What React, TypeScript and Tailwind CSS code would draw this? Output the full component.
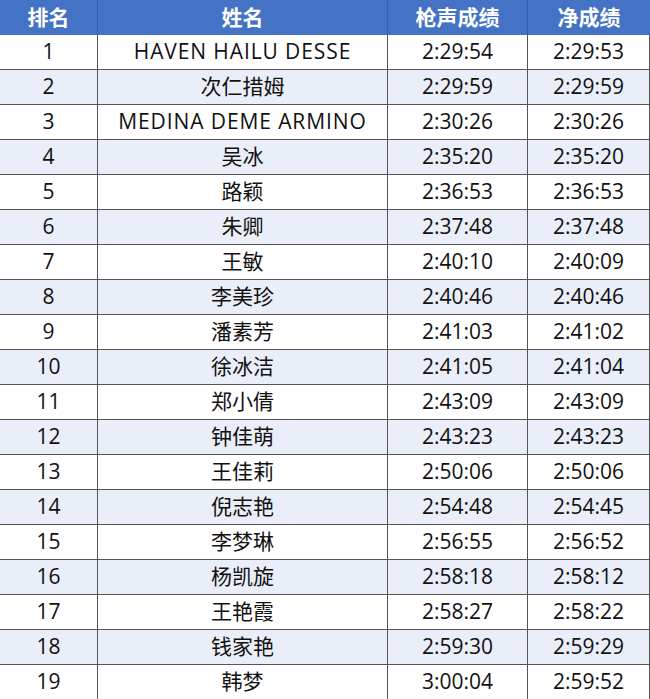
import React from "react";

const rows: [string, string, string, string][] = [
  ["1", "HAVEN HAILU DESSE", "2:29:54", "2:29:53"],
  ["2", "次仁措姆", "2:29:59", "2:29:59"],
  ["3", "MEDINA DEME ARMINO", "2:30:26", "2:30:26"],
  ["4", "吴冰", "2:35:20", "2:35:20"],
  ["5", "路颖", "2:36:53", "2:36:53"],
  ["6", "朱卿", "2:37:48", "2:37:48"],
  ["7", "王敏", "2:40:10", "2:40:09"],
  ["8", "李美珍", "2:40:46", "2:40:46"],
  ["9", "潘素芳", "2:41:03", "2:41:02"],
  ["10", "徐冰洁", "2:41:05", "2:41:04"],
  ["11", "郑小倩", "2:43:09", "2:43:09"],
  ["12", "钟佳萌", "2:43:23", "2:43:23"],
  ["13", "王佳莉", "2:50:06", "2:50:06"],
  ["14", "倪志艳", "2:54:48", "2:54:45"],
  ["15", "李梦琳", "2:56:55", "2:56:52"],
  ["16", "杨凯旋", "2:58:18", "2:58:12"],
  ["17", "王艳霞", "2:58:27", "2:58:22"],
  ["18", "钱家艳", "2:59:30", "2:59:29"],
  ["19", "韩梦", "3:00:04", "2:59:52"],
];

export default function App() {
  return (
    <div
      className="w-[650px] bg-white text-[#111] text-[21px]"
      style={{ fontFamily: '"Open Sans", "Noto Sans CJK SC", sans-serif' }}
    >
      <div className="grid grid-cols-[98px_290px_140px_122px] h-[35px] bg-[#4472c4] text-white font-bold">
        <div className="flex items-center justify-center border-r border-[#3a5fa8]">排名</div>
        <div className="flex items-center justify-center border-r border-[#3a5fa8]">姓名</div>
        <div className="flex items-center justify-center border-r border-[#3a5fa8]">枪声成绩</div>
        <div className="flex items-center justify-center">净成绩</div>
      </div>
      {rows.map((r, i) => (
        <div
          key={i}
          className={
            "grid grid-cols-[98px_290px_140px_122px] h-[35px] border-b border-[#555] " +
            (i % 2 === 1 ? "bg-[#e9eef8]" : "bg-white")
          }
        >
          <div className="flex items-center justify-center border-r border-[#555]">{r[0]}</div>
          <div
            className={
              "flex items-center justify-center border-r border-[#555] " +
              (/^[A-Z ]+$/.test(r[1]) ? "tracking-[0.9px]" : "")
            }
          >
            {r[1]}
          </div>
          <div className="flex items-center justify-center border-r border-[#555]">{r[2]}</div>
          <div className="flex items-center justify-center border-r border-[#555]">{r[3]}</div>
        </div>
      ))}
    </div>
  );
}
